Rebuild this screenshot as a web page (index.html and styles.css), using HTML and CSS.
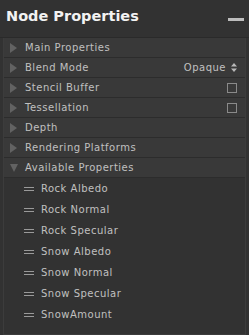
FILE: index.html
```
<!DOCTYPE html>
<html lang="en">
<head>
    <meta charset="UTF-8">
    <title>Node Properties</title>
    <link rel="stylesheet" href="styles.css">
</head>
<body>
    <div class="panel">
        <div class="header">
            <span class="title">Node Properties</span>
            <span class="minimize"></span>
        </div>
        <div class="sections">
            <div class="row"><span class="arrow"></span><span class="label">Main Properties</span></div>
            <div class="row"><span class="arrow"></span><span class="label">Blend Mode</span><span class="value">Opaque</span>
                <svg class="updown" width="6" height="9" viewBox="0 0 6 9"><path d="M3 0 L6 3.5 L0 3.5 Z M0 5.5 L6 5.5 L3 9 Z" fill="#b8b8b8"/></svg>
            </div>
            <div class="row"><span class="arrow"></span><span class="label">Stencil Buffer</span><span class="check"></span></div>
            <div class="row"><span class="arrow"></span><span class="label">Tessellation</span><span class="check"></span></div>
            <div class="row"><span class="arrow"></span><span class="label">Depth</span></div>
            <div class="row"><span class="arrow"></span><span class="label">Rendering Platforms</span></div>
            <div class="row open"><span class="arrow down"></span><span class="label">Available Properties</span></div>
            <ul class="props">
                <li><span class="grip"></span>Rock Albedo</li>
                <li><span class="grip"></span>Rock Normal</li>
                <li><span class="grip"></span>Rock Specular</li>
                <li><span class="grip"></span>Snow Albedo</li>
                <li><span class="grip"></span>Snow Normal</li>
                <li><span class="grip"></span>Snow Specular</li>
                <li><span class="grip"></span>SnowAmount</li>
            </ul>
        </div>
    </div>
</body>
</html>
```

FILE: styles.css
```
body {
    margin: 0;
    padding: 0;
    background-color: #333;
    font-family: "DejaVu Sans", sans-serif;
    color: #c0c0c0;
}
.panel {
    width: 249px;
    height: 335px;
    box-sizing: border-box;
    background: #323232;
}
.header {
    height: 38px;
    display: flex;
    align-items: center;
    justify-content: space-between;
    padding: 0 5px 0 6px;
    border-bottom: 1px solid #2a2a2a;
    box-sizing: border-box;
}
.title {
    color: #f2f2f2;
    font-weight: bold;
    font-size: 14.5px;
    margin-top: -6px;
}
.minimize {
    width: 16px;
    height: 3px;
    background: #bdbdbd;
    margin-top: 1px;
}
.sections {
    margin: 0 3px;
    border-left: 1px solid #3c3c3c;
    border-right: 1px solid #3c3c3c;
    height: 296px;
    border-bottom: 1px solid #3c3c3c;
}
.row {
    height: 20px;
    display: flex;
    align-items: center;
    background: #393939;
    border-bottom: 1px solid #2c2c2c;
    box-sizing: border-box;
    font-size: 10px;
    letter-spacing: 0.5px;
    padding-right: 8px;
}
.arrow {
    width: 0;
    height: 0;
    border-left: 7px solid #626262;
    border-top: 5px solid transparent;
    border-bottom: 5px solid transparent;
    margin: 0 8px 0 6px;
}
.arrow.down {
    border-left: 4px solid transparent;
    border-right: 4px solid transparent;
    border-top: 8px solid #626262;
    border-bottom: none;
    margin: 1px 7px 0 6px;
}
.label {
    flex: 1;
}
.updown {
    margin-left: 5px;
}
.check {
    width: 8px;
    height: 8px;
    border: 1px solid #8a8a8a;
}
.props {
    list-style: none;
    margin: 0;
    padding: 0;
}
.props li {
    height: 21px;
    display: flex;
    align-items: center;
    font-size: 10px;
    letter-spacing: 0.5px;
    padding-left: 20px;
}
.grip {
    width: 10px;
    height: 2px;
    border-top: 1px solid #9a9a9a;
    border-bottom: 1px solid #9a9a9a;
    margin-right: 7px;
}
```
